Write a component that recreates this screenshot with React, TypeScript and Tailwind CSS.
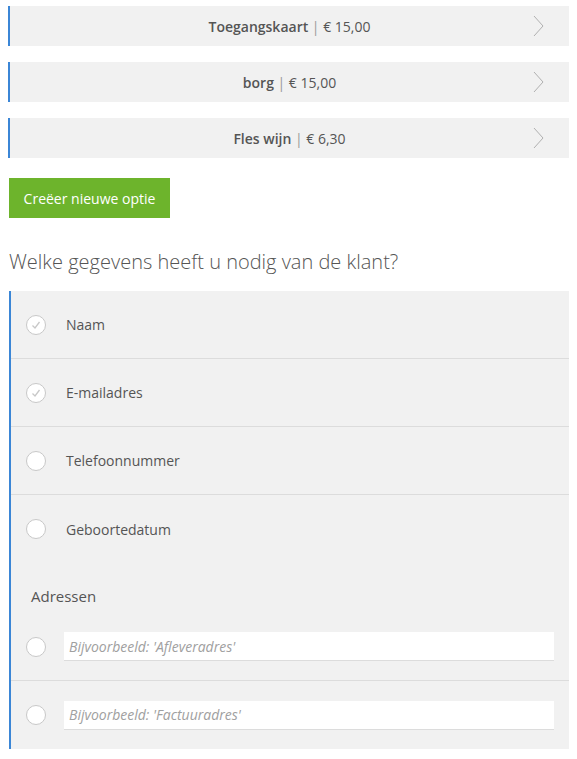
import React from "react";

const font = { fontFamily: '"Open Sans", "Noto Sans", sans-serif' };

function Chevron() {
  return (
    <svg width="12" height="22" viewBox="0 0 12 22" className="absolute right-[24px] top-[9px]">
      <polyline points="1,1 10,11 1,21" fill="none" stroke="#b0b0b0" strokeWidth="1" />
    </svg>
  );
}

function Bar({ name, price }: { name: string; price: string }) {
  return (
    <div className="relative flex h-[40px] items-center justify-center border-l-2 border-[#3b86d6] bg-[#f1f1f1] text-[14px] text-[#555]">
      <span>
        <span className="font-semibold">{name}</span>
        <span className="text-[#999]"> | </span>
        <span>{price}</span>
      </span>
      <Chevron />
    </div>
  );
}

function Circle({ checked }: { checked: boolean }) {
  return (
    <div className="flex h-[20px] w-[20px] shrink-0 items-center justify-center rounded-full border border-[#c8c8c8] bg-white">
      {checked && (
        <svg width="12" height="12" viewBox="0 0 12 12">
          <polyline points="2.5,6.5 5,9 9.5,3" fill="none" stroke="#c8c8c8" strokeWidth="1.3" />
        </svg>
      )}
    </div>
  );
}

function Row({ label, checked, border = true }: { label: string; checked: boolean; border?: boolean }) {
  return (
    <div className={`flex h-[68px] items-center pl-[15px] ${border ? "border-b border-[#dcdcdc]" : ""}`}>
      <Circle checked={checked} />
      <span className="ml-[20px] text-[14px] text-[#555]">{label}</span>
    </div>
  );
}

function AddrRow({ placeholder, border }: { placeholder: string; border: boolean }) {
  return (
    <div className={`flex h-[68px] items-center pl-[15px] pr-[15px] ${border ? "border-b border-[#dcdcdc]" : ""}`}>
      <Circle checked={false} />
      <div className="ml-[18px] flex h-[29px] flex-1 items-center border-b border-[#dcdcdc] bg-white pl-[5px] text-[14px] italic text-[#a0a0a0]">
        {placeholder}
      </div>
    </div>
  );
}

export default function App() {
  return (
    <div style={font} className="min-h-[759px] bg-white pl-[8px] pr-[8px] pt-[6px]">
      <div className="flex flex-col gap-[16px]">
        <Bar name="Toegangskaart" price="€ 15,00" />
        <Bar name="borg" price="€ 15,00" />
        <Bar name="Fles wijn" price="€ 6,30" />
      </div>
      <button className="ml-[1px] mt-[20px] flex h-[40px] w-[161px] items-center justify-center bg-[#6db42c] text-[14px] text-white">
        Creëer nieuwe optie
      </button>
      <h2 className="ml-[1px] mt-[31px] text-[20px] font-light leading-[26px] text-[#555]">
        Welke gegevens heeft u nodig van de klant?
      </h2>
      <div className="ml-[1px] mt-[16px] border-l-2 border-[#3b86d6] bg-[#f1f1f1]">
        <Row label="Naam" checked={true} />
        <Row label="E-mailadres" checked={true} />
        <Row label="Telefoonnummer" checked={false} />
        <Row label="Geboortedatum" checked={false} border={false} />
        <div className="h-[50px] pl-[20px] pt-[23px] text-[15px] leading-[20px] text-[#555]">Adressen</div>
        <AddrRow placeholder="Bijvoorbeeld: 'Afleveradres'" border={true} />
        <AddrRow placeholder="Bijvoorbeeld: 'Factuuradres'" border={false} />
      </div>
    </div>
  );
}
